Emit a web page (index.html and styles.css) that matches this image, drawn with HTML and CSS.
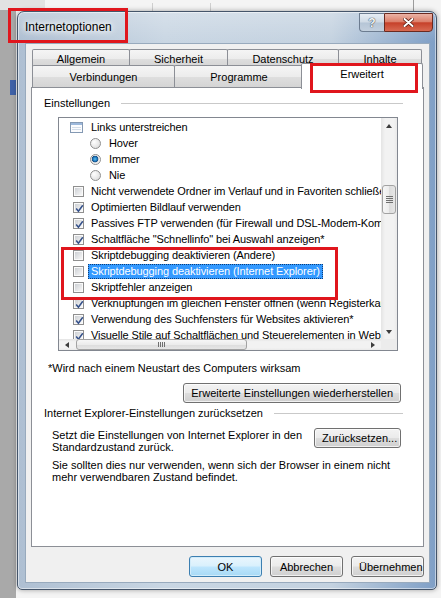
FILE: index.html
```html
<!DOCTYPE html>
<html lang="de">
<head>
  <meta charset="UTF-8">
  <title>Internetoptionen</title>
  <link rel="stylesheet" href="styles.css">
</head>
<body>

<div class="desk">
  <div class="window">
    <div class="titlebar">
      <span class="title">Internetoptionen</span>
      <div class="caption">
        <span class="cap cap-help">?</span>
        <span class="cap cap-close">
          <svg width="11" height="9" viewBox="0 0 11 9">
            <path d="M1.5 1 L9.5 8 M9.5 1 L1.5 8" stroke="#5a1c12" stroke-width="3.6" stroke-linecap="round"/>
            <path d="M1.5 1 L9.5 8 M9.5 1 L1.5 8" stroke="#fff" stroke-width="2" stroke-linecap="round"/>
          </svg>
        </span>
      </div>
    </div>

    <div class="client">
      <div class="tabs">
        <div class="tab-row back">
          <span class="tab">Allgemein</span>
          <span class="tab">Sicherheit</span>
          <span class="tab">Datenschutz</span>
          <span class="tab">Inhalte</span>
        </div>
        <div class="tab-row front">
          <span class="tab">Verbindungen</span>
          <span class="tab">Programme</span>
          <span class="tab active">Erweitert</span>
        </div>
      </div>

      <div class="panel">
        <div class="group-head">Einstellungen</div>

        <div class="list">
          <div class="items">
            <div class="item">
              <span class="ico-links">
                <svg width="13" height="11" viewBox="0 0 13 11">
                  <rect x="0.5" y="0.5" width="12" height="10" fill="#fbfcfe" stroke="#8499b3"/>
                  <rect x="1" y="1" width="11" height="2" fill="#9db9dc"/>
                  <path d="M2 5.5 H11 M2 7.5 H11" stroke="#d3dde9"/>
                </svg>
              </span>
              <span>Links unterstreichen</span>
            </div>
            <div class="item sub"><span class="radio"></span><span>Hover</span></div>
            <div class="item sub"><span class="radio on"></span><span>Immer</span></div>
            <div class="item sub"><span class="radio"></span><span>Nie</span></div>
            <div class="item"><span class="check"></span><span>Nicht verwendete Ordner im Verlauf und in Favoriten schließen*</span></div>
            <div class="item"><span class="check"><svg width="9" height="9" viewBox="0 0 9 9"><path d="M1.2 4.6 L3.4 7.2 L7.8 1.2" fill="none" stroke="#34508a" stroke-width="1.5"/></svg></span><span>Optimierten Bildlauf verwenden</span></div>
            <div class="item"><span class="check"><svg width="9" height="9" viewBox="0 0 9 9"><path d="M1.2 4.6 L3.4 7.2 L7.8 1.2" fill="none" stroke="#34508a" stroke-width="1.5"/></svg></span><span>Passives FTP verwenden (für Firewall und DSL-Modem-Kompatibilität)</span></div>
            <div class="item"><span class="check"><svg width="9" height="9" viewBox="0 0 9 9"><path d="M1.2 4.6 L3.4 7.2 L7.8 1.2" fill="none" stroke="#34508a" stroke-width="1.5"/></svg></span><span>Schaltfläche "Schnellinfo" bei Auswahl anzeigen*</span></div>
            <div class="item"><span class="check"></span><span>Skriptdebugging deaktivieren (Andere)</span></div>
            <div class="item"><span class="check"></span><span class="sel">Skriptdebugging deaktivieren (Internet Explorer)</span></div>
            <div class="item"><span class="check"></span><span>Skriptfehler anzeigen</span></div>
            <div class="item"><span class="check"><svg width="9" height="9" viewBox="0 0 9 9"><path d="M1.2 4.6 L3.4 7.2 L7.8 1.2" fill="none" stroke="#34508a" stroke-width="1.5"/></svg></span><span>Verknüpfungen im gleichen Fenster öffnen (wenn Registerkarten deaktiviert sind)</span></div>
            <div class="item"><span class="check"><svg width="9" height="9" viewBox="0 0 9 9"><path d="M1.2 4.6 L3.4 7.2 L7.8 1.2" fill="none" stroke="#34508a" stroke-width="1.5"/></svg></span><span>Verwendung des Suchfensters für Websites aktivieren*</span></div>
            <div class="item"><span class="check"><svg width="9" height="9" viewBox="0 0 9 9"><path d="M1.2 4.6 L3.4 7.2 L7.8 1.2" fill="none" stroke="#34508a" stroke-width="1.5"/></svg></span><span>Visuelle Stile auf Schaltflächen und Steuerelementen in Webseiten verwenden</span></div>
          </div>

          <div class="vscroll">
            <span class="arrow arrow-up"></span>
            <span class="thumb thumb-v"></span>
            <span class="arrow arrow-down"></span>
          </div>
          <div class="hscroll">
            <span class="arrow arrow-left"></span>
            <span class="thumb thumb-h"></span>
            <span class="arrow arrow-right"></span>
          </div>
          <div class="corner"></div>
        </div>

        <div class="note">*Wird nach einem Neustart des Computers wirksam</div>
        <div class="btn-row">
          <button class="btn">Erweiterte Einstellungen wiederherstellen</button>
        </div>

        <div class="group-head reset-head">Internet Explorer-Einstellungen zurücksetzen</div>
        <div class="reset-row">
          <p class="reset-text">Setzt die Einstellungen von Internet Explorer in den<br>Standardzustand zurück.</p>
          <button class="btn btn-reset">Zurücksetzen...</button>
        </div>
        <p class="reset-text hint">Sie sollten dies nur verwenden, wenn sich der Browser in einem nicht<br>mehr verwendbaren Zustand befindet.</p>
      </div>

      <div class="dialog-buttons">
        <button class="btn btn-default">OK</button>
        <button class="btn">Abbrechen</button>
        <button class="btn">Übernehmen</button>
      </div>
    </div>
  </div>

  <div class="mark mark-title"></div>
  <div class="mark mark-tab"></div>
  <div class="mark mark-script"></div>
</div>

</body>
</html>
```

FILE: styles.css
```css
* {
  box-sizing: border-box;
}
body {
  margin: 0;
  font-family: "Liberation Sans", Arial, sans-serif;
  font-size: 11px;
  color: #111;
}
.desk {
  position: relative;
  width: 441px;
  height: 598px;
  overflow: hidden;
  padding: 11px 4px 0 17px;
  background:
    linear-gradient(#3f62a8, #3f62a8) 10px 80px / 6px 15px no-repeat,
    linear-gradient(#a9a9a9, #a9a9a9) 0 10px / 16px 100% no-repeat,
    linear-gradient(#9c9c9c, #9c9c9c) 413px 0 / 1px 11px no-repeat,
    linear-gradient(#cfcfcf, #cfcfcf) 152px 3px / 1px 8px no-repeat,
    linear-gradient(#cfcfcf, #cfcfcf) 210px 3px / 1px 8px no-repeat,
    linear-gradient(#e2e2e2, #e2e2e2) 0 0 / 45px 10px no-repeat,
    #f4f4f4;
}

/* window frame */
.window {
  width: 420px;
  height: 579px;
  display: flex;
  flex-direction: column;
  border: 1px solid #45556a;
  border-radius: 7px 7px 5px 5px;
  background:
    linear-gradient(rgba(255,255,255,0.25), rgba(255,255,255,0) 30px),
    linear-gradient(to right, #aebfd2, #c9d6e3 35%, #c4d2e0 75%, #7f9fc6);
  box-shadow: inset 0 0 0 1px rgba(255,255,255,0.5), 0 0 5px rgba(0,0,0,0.35);
  padding: 0 6px 6px 7px;
}
.titlebar {
  height: 32px;
  display: flex;
  justify-content: space-between;
  align-items: flex-start;
}
.title {
  margin-top: 8px;
  font-size: 12px;
  color: #000;
  text-shadow: 0 0 5px #fff, 0 0 9px #fff, 0 0 12px #fff;
}
.caption {
  display: flex;
  margin: 1px -3px 0 0;
}
.cap {
  height: 19px;
  display: flex;
  align-items: center;
  justify-content: center;
}
.cap-help {
  width: 25px;
  border: 1px solid #6c7c90;
  border-right: none;
  border-radius: 0 0 0 4px;
  background: linear-gradient(#e6edf4, #cfdae5 48%, #b5c5d6 52%, #c3d0de);
  color: #f4f6f8;
  font-weight: bold;
  font-size: 12px;
  text-shadow: 0 0 1px #2c3846, 0 0 1px #2c3846;
}
.cap-close {
  width: 49px;
  border: 1px solid #6a2a20;
  border-radius: 0 0 4px 0;
  background: linear-gradient(#ebb3a6, #dc806b 45%, #c6412a 52%, #d86a52);
}

/* client area */
.client {
  flex: 1;
  display: flex;
  flex-direction: column;
  background: #f0f0f0;
  border: 1px solid #98aabd;
  padding: 5px;
}
.tabs {
  height: 38px;
  padding-left: 1px;
}
.tab-row {
  display: grid;
}
.tab-row.back {
  grid-template-columns: 97px 98px 111px 83px;
  height: 16px;
}
.tab-row.front {
  grid-template-columns: 142px 129px 118px;
  height: 22px;
}
.tab {
  border: 1px solid #8c8f96;
  border-bottom: none;
  margin-right: -1px;
  border-radius: 2px 2px 0 0;
  background: linear-gradient(#f5f5f5, #ececec 50%, #dedede 52%, #d3d3d3);
  text-align: center;
  color: #000;
}
.back .tab {
  line-height: 18px;
}
.front .tab {
  line-height: 22px;
}
.tab.active {
  position: relative;
  z-index: 1;
  margin: -2px -2px -1px -2px;
  background: #fff;
  line-height: 21px;
}

.panel {
  height: 460px;
  background: #fff;
  border: 1px solid #8c8f96;
  padding: 9px 20px 0 12px;
}
.group-head {
  display: flex;
  align-items: center;
  gap: 11px;
  line-height: 13px;
  color: #000;
}
.group-head::after {
  content: "";
  flex: 1;
  border-top: 1px solid #c9c9c9;
}

/* settings list */
.list {
  margin: 7px 5px 0 14px;
  height: 234px;
  border: 1px solid #828790;
  display: grid;
  grid-template-columns: 1fr 16px;
  grid-template-rows: 1fr 11px;
}
.items {
  overflow: hidden;
  padding-top: 1px;
  min-width: 0;
  letter-spacing: -0.1px;
}
.item {
  display: flex;
  align-items: center;
  height: 16px;
  padding-left: 14px;
  white-space: nowrap;
  color: #000;
}
.item.sub {
  padding-left: 31px;
}
.ico-links {
  flex: none;
  display: flex;
  margin: 0 8px 0 -3px;
}
.check {
  flex: none;
  display: grid;
  place-items: center;
  width: 11px;
  height: 11px;
  margin-right: 7px;
  padding: 1px;
  border: 1px solid #8f8f8f;
  background: linear-gradient(135deg, #cdd0d4, #f7f7f7) content-box, #fafafa;
}
.radio {
  flex: none;
  width: 11px;
  height: 11px;
  margin-right: 8px;
  border-radius: 50%;
  border: 1px solid #8f8f8f;
  background: radial-gradient(circle at 35% 35%, #fff, #d6d6d6);
}
.radio.on {
  background: radial-gradient(circle at 45% 45%, #5ec0f0 0, #1f79be 2px, #174f86 3px, #e4e4e4 3.6px, #f7f7f7 5px);
}
.sel {
  background: #3399ff;
  color: #fff;
  padding: 0 2px;
  margin-left: -3px;
  border: 1px dotted #0d3d78;
  line-height: 13px;
}

.vscroll {
  display: flex;
  flex-direction: column;
  background: linear-gradient(to right, #e4e4e4, #f2f2f2 25%, #f2f2f2 80%, #e9e9e9);
}
.hscroll {
  display: flex;
  align-items: center;
  background: linear-gradient(#e4e4e4, #f2f2f2 25%, #f2f2f2 80%, #e9e9e9);
}
.corner {
  background: #ececec;
}
.arrow {
  flex: none;
  display: flex;
  align-items: center;
  justify-content: center;
  width: 16px;
  height: 16px;
}
.hscroll .arrow {
  height: 11px;
}
.arrow::before {
  content: "";
  border: 3px solid transparent;
}
.arrow-up::before {
  border-bottom: 4px solid #3c3c3c;
  border-top: none;
}
.arrow-down {
  margin-top: auto;
  height: 14px;
}
.arrow-down::before {
  border-top: 4px solid #3c3c3c;
  border-bottom: none;
}
.arrow-left::before {
  border-right: 4px solid #3c3c3c;
  border-left: none;
}
.arrow-right {
  margin-left: auto;
}
.arrow-right::before {
  border-left: 4px solid #3c3c3c;
  border-right: none;
}
.thumb {
  display: flex;
  align-items: center;
  justify-content: center;
  border: 1px solid #a2a2a2;
  border-radius: 3px;
}
.thumb-v {
  margin: 51px 1px 0 1px;
  height: 29px;
  background: linear-gradient(to right, #f6f6f6, #ececec 50%, #dcdcdc 52%, #e6e6e6);
}
.thumb-v::before {
  content: "";
  width: 7px;
  height: 7px;
  background: repeating-linear-gradient(#6f6f6f 0 1px, transparent 1px 2px);
}
.thumb-h {
  margin-left: 1px;
  width: 171px;
  height: 11px;
  background: linear-gradient(#f6f6f6, #ececec 50%, #dcdcdc 52%, #e6e6e6);
}
.thumb-h::before {
  content: "";
  width: 7px;
  height: 5px;
  background: repeating-linear-gradient(to right, #6f6f6f 0 1px, transparent 1px 2px);
}

.note {
  margin-top: 11px;
  padding-left: 4px;
  line-height: 13px;
  color: #000;
}
.btn-row {
  display: flex;
  justify-content: flex-end;
  margin: 8px 2px 0 0;
}
.btn {
  height: 20px;
  padding: 0 7px;
  border: 1px solid #707070;
  border-radius: 3px;
  background: linear-gradient(#f3f3f3, #ebebeb 48%, #dddddd 52%, #cfcfcf);
  box-shadow: inset 0 0 0 1px rgba(255,255,255,0.7);
  font-family: inherit;
  font-size: 11px;
  color: #000;
}
.reset-head {
  margin-top: 4px;
}
.reset-row {
  display: flex;
  justify-content: space-between;
  align-items: flex-start;
  margin: 8px 2px 0 8px;
}
.reset-text {
  margin: 0;
  padding-top: 1px;
  line-height: 12px;
  color: #000;
}
.btn-reset {
  width: 87px;
}
.hint {
  margin: 5px 0 0 8px;
}

.dialog-buttons {
  margin-top: 9px;
  display: flex;
  justify-content: flex-end;
  gap: 8px;
}
.dialog-buttons .btn {
  width: 73px;
  height: 21px;
}
.btn-default {
  border-color: #3c7fb1;
  background: linear-gradient(#eaf6fd, #d9f0fc 48%, #bee6fd 52%, #a7d9f5);
  box-shadow: inset 0 0 0 1px #d2ecfa;
}

/* red annotation boxes */
.mark {
  position: absolute;
  z-index: 2;
  border: 3px solid #e0161d;
}
.mark-title {
  left: 8px;
  top: 8px;
  width: 120px;
  height: 35px;
}
.mark-tab {
  left: 310px;
  top: 63px;
  width: 108px;
  height: 30px;
}
.mark-script {
  left: 61px;
  top: 247px;
  width: 277px;
  height: 53px;
}
```
